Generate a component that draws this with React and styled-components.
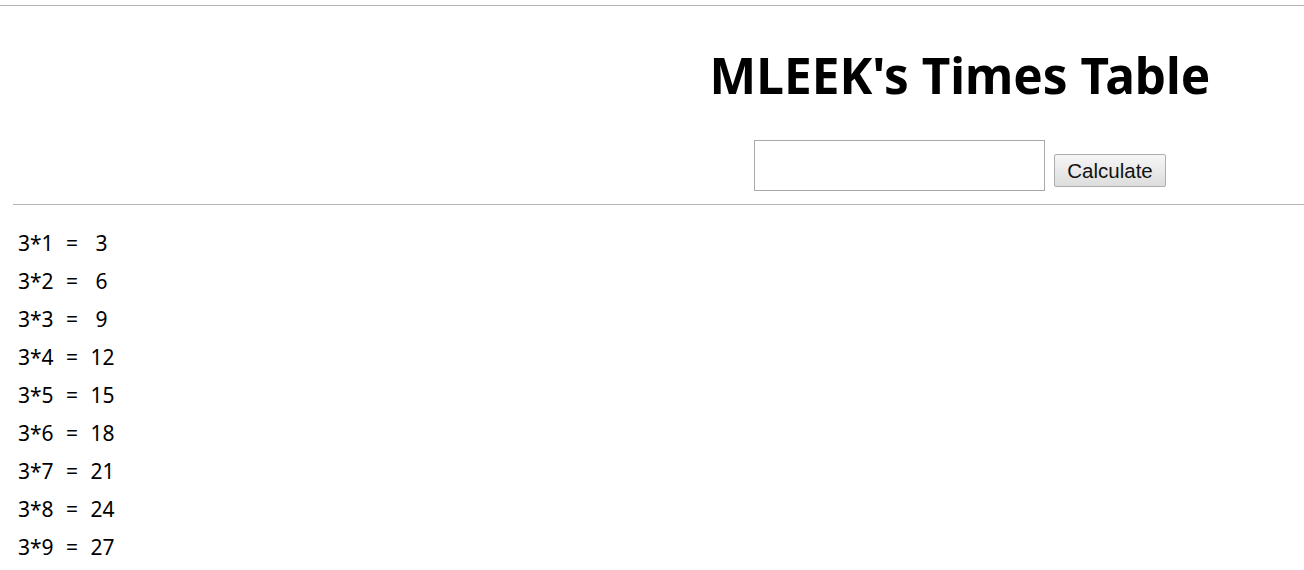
import React, { useState } from "react";
import styled, { createGlobalStyle } from "styled-components";

const GlobalStyle = createGlobalStyle`
  body {
    margin: 0;
    background: #ffffff;
    font-family: "Noto Sans", "Noto Sans CJK KR", sans-serif;
    color: #000;
  }
`;

export default function App() {
  const [dan, setDan] = useState(3);
  const [value, setValue] = useState("");
  const rows = Array.from({ length: 9 }, (_, i) => i + 1);

  return (
    <Page>
      <GlobalStyle />
      <TopRule />
      <Header>
        <Title>MLEEK's Times Table</Title>
        <Form
          onSubmit={(e) => {
            e.preventDefault();
            const n = parseInt(value, 10);
            if (!isNaN(n)) setDan(n);
          }}
        >
          <NumberInput value={value} onChange={(e) => setValue(e.target.value)} />
          <CalcButton type="submit">Calculate</CalcButton>
        </Form>
      </Header>
      <Divider />
      <List>
        {rows.map((n) => {
          const result = dan * n;
          return (
            <Row key={n}>
              {`${dan}*${n} = `}
              <Result $pad={result < 10}>{result}</Result>
            </Row>
          );
        })}
      </List>
    </Page>
  );
}

const Page = styled.div`
  width: 100%;
  padding-top: 5px;
`;

const TopRule = styled.div`
  height: 0;
  border-top: 1px solid #b4b4b4;
`;

const Header = styled.header`
  margin-left: 616px;
  width: 688px;
  display: flex;
  flex-direction: column;
  align-items: center;
  padding-top: 40px;
`;

const Title = styled.h1`
  margin: 0;
  font-size: 49.5px;
  font-weight: 700;
  line-height: 58px;
`;

const Form = styled.form`
  display: flex;
  align-items: flex-end;
  gap: 9px;
  margin-top: 36px;
`;

const NumberInput = styled.input`
  box-sizing: border-box;
  width: 291px;
  height: 51px;
  border: 1px solid #a9a9a9;
  padding: 0 6px;
  font-size: 20px;
  outline: none;
`;

const CalcButton = styled.button`
  box-sizing: border-box;
  width: 112px;
  height: 33px;
  margin-bottom: 4px;
  border: 1px solid #adadad;
  border-radius: 2px;
  background: linear-gradient(#f6f6f6, #dddddd);
  font-family: "Liberation Sans", Arial, sans-serif;
  font-size: 20.5px;
  color: #111;
  padding: 0;
`;

const Divider = styled.div`
  margin: 13px 0 0 13px;
  border-top: 1px solid #b4b4b4;
`;

const List = styled.div`
  padding: 19px 0 0 18px;
`;

const Row = styled.div`
  white-space: pre;
  font-size: 21px;
  line-height: 38px;
  word-spacing: 7px;
`;

const Result = styled.span`
  padding-left: ${({ $pad }) => ($pad ? "5px" : "0")};
`;
